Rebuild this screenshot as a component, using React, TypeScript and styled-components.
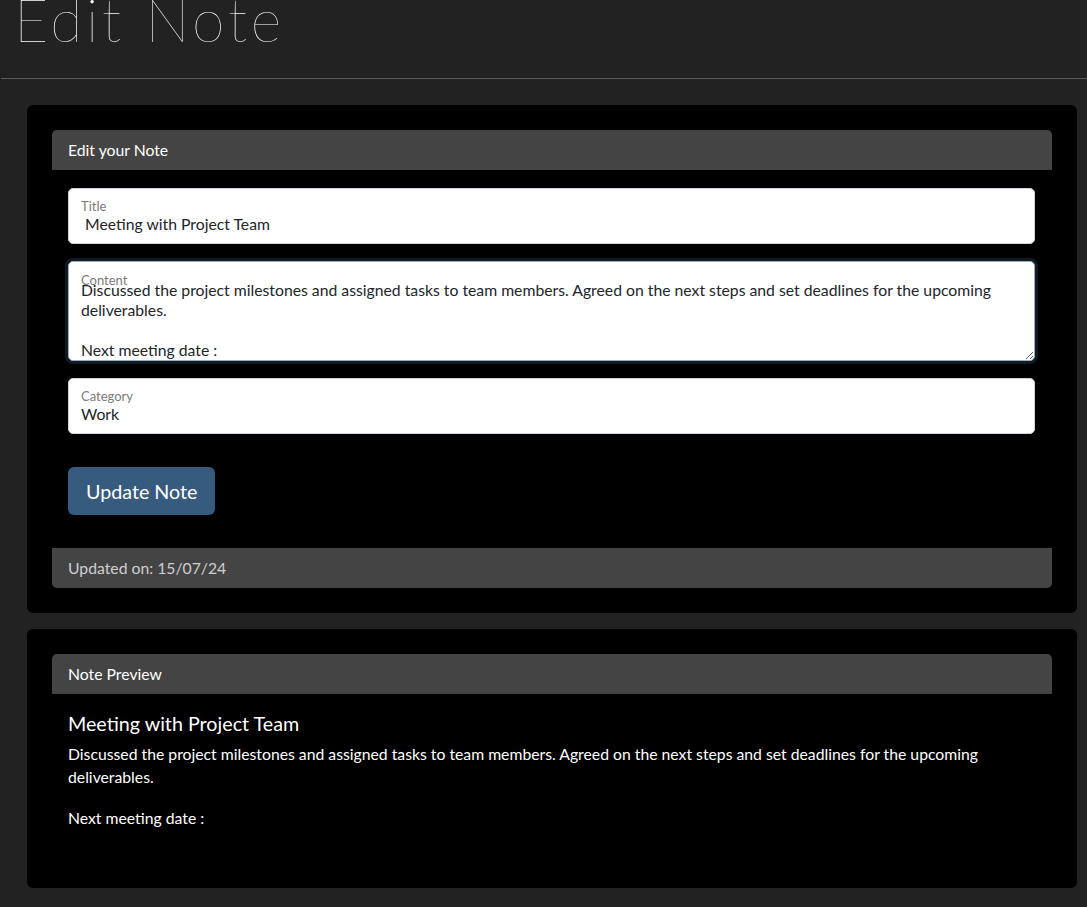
import React from "react";
import styled, { createGlobalStyle } from "styled-components";

const GlobalStyle = createGlobalStyle`
  html, body {
    margin: 0;
    padding: 0;
    background: #222222;
    font-family: Lato, "Open Sans", sans-serif;
    color: #ffffff;
  }
  * {
    box-sizing: border-box;
  }
`;

const PageHeader = styled.header`
  height: 79px;
  margin-left: 1px;
  border-bottom: 1px solid #5a5a5a;
  overflow: hidden;
`;

const Heading = styled.h1`
  margin: -16px 0 0 13px;
  font-family: Lato, sans-serif;
  font-weight: 100;
  font-size: 59px;
  line-height: 72px;
  letter-spacing: 3.6px;
  color: #ffffff;
`;

const Main = styled.main`
  display: flex;
  flex-direction: column;
  gap: 16px;
  padding: 26px 10px 20px 27px;
`;

const OuterCard = styled.section`
  background: #000000;
  border-radius: 6px;
  padding: 25px;
`;

const InnerCard = styled.div`
  display: flex;
  flex-direction: column;
`;

const CardHeader = styled.div`
  height: 40px;
  display: flex;
  align-items: center;
  padding: 0 16px 1px;
  background: #444444;
  border-radius: 5px 5px 0 0;
  font-size: 15.75px;
  color: #ffffff;
`;

const CardFooter = styled.div`
  height: 40px;
  display: flex;
  align-items: center;
  padding: 0 16px 1px;
  background: #444444;
  border-radius: 0 0 5px 5px;
  font-size: 15.75px;
  color: #cfcfcf;
`;

const FormBody = styled.form`
  display: flex;
  flex-direction: column;
  gap: 17px;
  padding: 18px 17px 33px 16px;
`;

const Floating = styled.div<{ $focused?: boolean }>`
  position: relative;
  background: #ffffff;
  border: 1px solid ${(p) => (p.$focused ? "#9badbf" : "#ced4da")};
  border-radius: 5px;
  box-shadow: ${(p) => (p.$focused ? "0 0 0 3px #111a24" : "none")};
`;

const FloatLabel = styled.label<{ $tight?: boolean }>`
  position: absolute;
  top: ${(p) => (p.$tight ? 5 : 2)}px;
  left: 1px;
  right: 20px;
  padding: 8px 11px ${(p) => (p.$tight ? 0 : 3)}px;
  background: #ffffff;
  border-radius: 5px 5px 0 0;
  font-size: 13px;
  line-height: ${(p) => (p.$tight ? 10 : 15)}px;
  color: #7a7a7a;
  pointer-events: none;
`;

const Input = styled.input`
  display: block;
  width: 100%;
  height: 54px;
  padding: 22px 12px 8px;
  border: none;
  border-radius: 5px;
  background: transparent;
  font-family: Lato, sans-serif;
  font-size: 15.75px;
  color: #212529;
  outline: none;
`;

const TextArea = styled.textarea`
  display: block;
  width: 100%;
  height: 98px;
  padding: 18px 12px 4px;
  border: none;
  border-radius: 5px;
  background: transparent;
  font-family: Lato, sans-serif;
  font-size: 15.75px;
  line-height: 20px;
  color: #212529;
  outline: none;
  resize: vertical;
  overflow: hidden;
`;

const ButtonRow = styled.div`
  padding-top: 16px;
`;

const PrimaryButton = styled.button`
  height: 48px;
  padding: 0 18px;
  border: none;
  border-radius: 6px;
  background: #375a7f;
  color: #ffffff;
  font-family: Lato, sans-serif;
  font-size: 19.7px;
`;

const PreviewBody = styled.div`
  padding: 18px 16px 34px;
`;

const PreviewTitle = styled.h5`
  margin: 0 0 6px;
  font-size: 19.7px;
  font-weight: 400;
  line-height: 24px;
`;

const PreviewText = styled.p<{ $gap?: number }>`
  margin: 0 0 ${(p) => p.$gap ?? 0}px;
  font-size: 15.75px;
  line-height: 23px;
`;

const title = "Meeting with Project Team";
const summary =
  "Discussed the project milestones and assigned tasks to team members. Agreed on the next steps and set deadlines for the upcoming deliverables.";
const content = summary + "\n\nNext meeting date : ";

export default function App() {
  return (
    <>
      <GlobalStyle />
      <PageHeader>
        <Heading>Edit Note</Heading>
      </PageHeader>
      <Main>
        <OuterCard>
          <InnerCard>
            <CardHeader>Edit your Note</CardHeader>
            <FormBody onSubmit={(e) => e.preventDefault()}>
              <Floating>
                <FloatLabel>Title</FloatLabel>
                <Input defaultValue={" " + title} />
              </Floating>
              <Floating $focused>
                <FloatLabel $tight>Content</FloatLabel>
                <TextArea defaultValue={content} />
              </Floating>
              <Floating>
                <FloatLabel>Category</FloatLabel>
                <Input defaultValue="Work" />
              </Floating>
              <ButtonRow>
                <PrimaryButton type="submit">Update Note</PrimaryButton>
              </ButtonRow>
            </FormBody>
            <CardFooter>Updated on: 15/07/24</CardFooter>
          </InnerCard>
        </OuterCard>
        <OuterCard>
          <InnerCard>
            <CardHeader>Note Preview</CardHeader>
            <PreviewBody>
              <PreviewTitle>{title}</PreviewTitle>
              <PreviewText $gap={18}>{summary}</PreviewText>
              <PreviewText>Next meeting date :</PreviewText>
            </PreviewBody>
          </InnerCard>
        </OuterCard>
      </Main>
    </>
  );
}
